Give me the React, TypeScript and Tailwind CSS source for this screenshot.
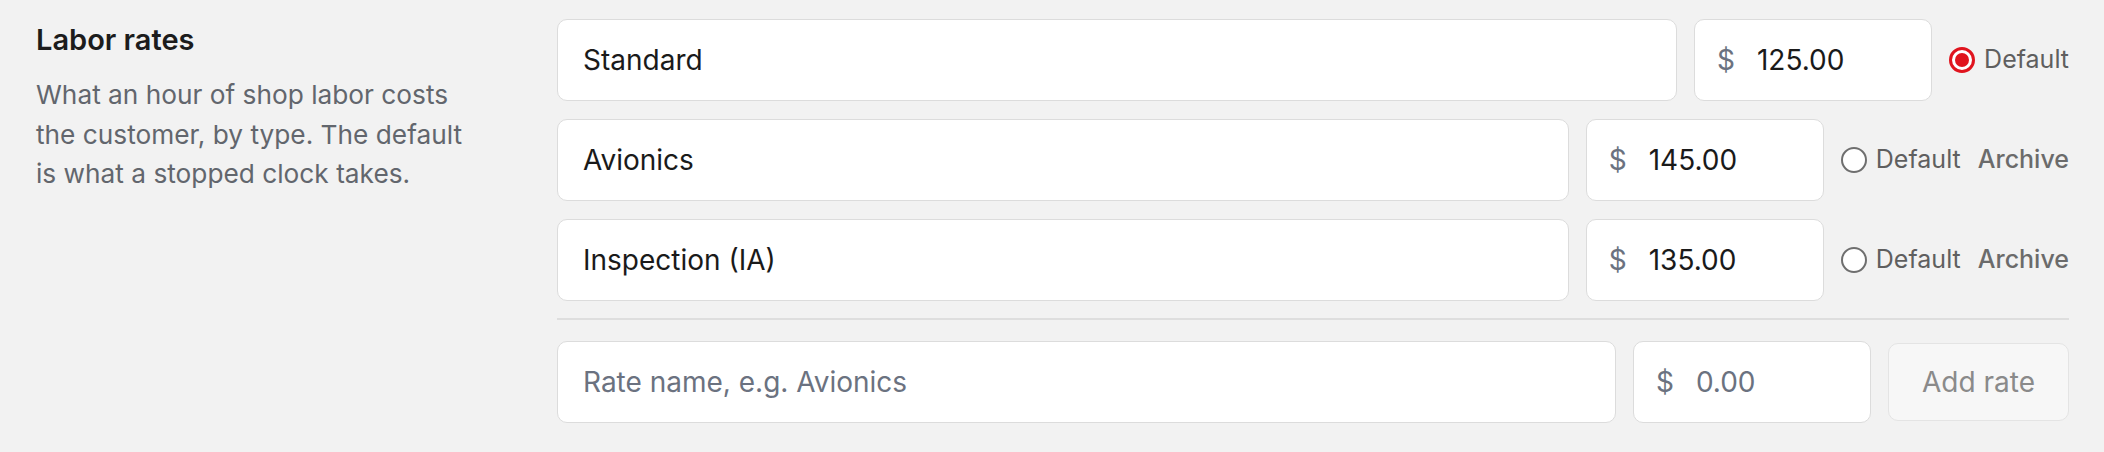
type Rate = {
  name: string;
  price: string;
  isDefault: boolean;
};

const rates: Rate[] = [
  { name: 'Standard', price: '125.00', isDefault: true },
  { name: 'Avionics', price: '145.00', isDefault: false },
  { name: 'Inspection (IA)', price: '135.00', isDefault: false },
];

function Radio({ checked }: { checked: boolean }) {
  if (checked) {
    return (
      <span className="flex h-[26px] w-[26px] shrink-0 items-center justify-center rounded-full border-[3px] border-[#e0141e] bg-white">
        <span className="h-[14px] w-[14px] rounded-full bg-[#e0141e]" />
      </span>
    );
  }
  return <span className="h-[26px] w-[26px] shrink-0 rounded-full border-[2.5px] border-[#6f6f6f] bg-white" />;
}

function PriceField({ value }: { value: string }) {
  return (
    <div className="flex h-[82px] w-[238px] shrink-0 items-center rounded-[10px] border-[1.75px] border-[#dcdcdc] bg-white pl-[22px]">
      <span className="w-[49px] text-[28px] text-[#6b7280]">$</span>
      <input
        readOnly
        value={value}
        placeholder="0.00"
        className="w-full min-w-0 bg-transparent text-[28px] text-[#1a1a1a] outline-none placeholder:text-[#6b7280]"
      />
    </div>
  );
}

export default function App() {
  return (
    <div className="flex h-[452px] w-full items-start bg-[#f2f2f2] pl-[36px] pr-[35px] pt-[19px] font-['Inter','Liberation_Sans',sans-serif]">
      <div className="w-[521px] shrink-0 pt-[1px]">
        <h2 className="text-[29px] font-semibold leading-[40px] text-[#1c1c1c]">Labor rates</h2>
        <p className="mt-[15px] max-w-[440px] text-[26.25px] leading-[39.5px] text-[#62666d]">
          What an hour of shop labor costs the customer, by type. The default is what a stopped clock takes.
        </p>
      </div>

      <div className="flex min-w-0 flex-1 flex-col">
        <div className="flex flex-col gap-[18px]">
          {rates.map((rate) => (
            <div key={rate.name} className="flex items-center gap-[17px]">
              <input
                readOnly
                value={rate.name}
                className="h-[82px] min-w-0 flex-1 rounded-[10px] border-[1.75px] border-[#dcdcdc] bg-white px-[25px] text-[28px] text-[#1a1a1a] outline-none"
              />
              <PriceField value={rate.price} />
              <div className="flex items-center">
                <label className="flex items-center gap-[9px] text-[25px] text-[#5f5f5f]">
                  <Radio checked={rate.isDefault} />
                  Default
                </label>
                {!rate.isDefault && (
                  <button className="ml-[17px] text-[25px] font-medium text-[#6b6b6b]">Archive</button>
                )}
              </div>
            </div>
          ))}
        </div>

        <div className="mt-[17px] h-[1.75px] bg-[#dedede]" />

        <div className="mt-[21px] flex items-center gap-[17px]">
          <input
            readOnly
            placeholder="Rate name, e.g. Avionics"
            className="h-[82px] min-w-0 flex-1 rounded-[10px] border-[1.75px] border-[#dcdcdc] bg-white px-[25px] text-[28px] text-[#1a1a1a] outline-none placeholder:text-[#6b7280]"
          />
          <PriceField value="" />
          <button className="h-[78px] w-[181px] shrink-0 rounded-[10px] border-[1.75px] border-[#e4e4e4] bg-[#f7f7f7] text-[28px] text-[#8a8a8a]">
            Add rate
          </button>
        </div>
      </div>
    </div>
  );
}
